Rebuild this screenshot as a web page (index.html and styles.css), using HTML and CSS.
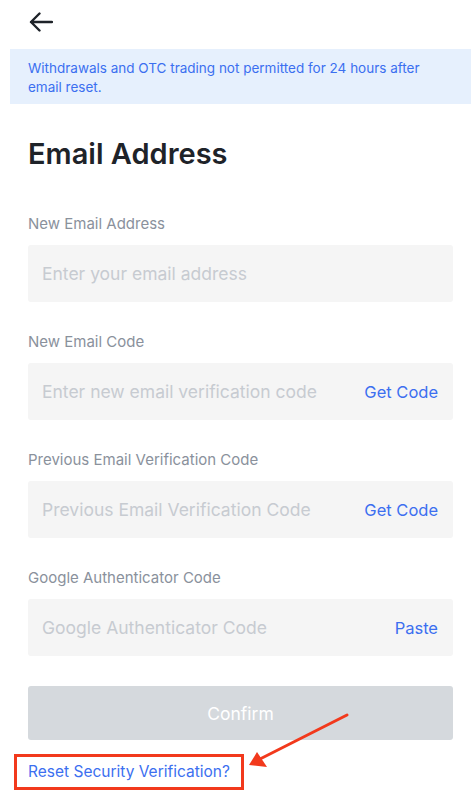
FILE: index.html
```html
<!DOCTYPE html>
<html lang="en">
<head>
    <meta charset="UTF-8">
    <meta name="viewport" content="width=device-width, initial-scale=1.0">
    <title>Email Address</title>
    <link rel="stylesheet" href="styles.css">
</head>
<body>
    <div class="topbar">
        <svg class="back" width="24" height="20" viewBox="0 0 24 20">
            <path d="M23 10H2M10.5 1.5L2 10l8.5 8.5" fill="none" stroke="#1e2329" stroke-width="2.4" stroke-linecap="round" stroke-linejoin="round"/>
        </svg>
    </div>

    <div class="notice">Withdrawals and OTC trading not permitted for 24 hours after email reset.</div>

    <div class="content">
        <h1 class="title">Email Address</h1>

        <div class="field">
            <div class="label">New Email Address</div>
            <div class="input"><span class="placeholder">Enter your email address</span></div>
        </div>

        <div class="field">
            <div class="label">New Email Code</div>
            <div class="input"><span class="placeholder">Enter new email verification code</span><a class="action" href="#">Get Code</a></div>
        </div>

        <div class="field">
            <div class="label">Previous Email Verification Code</div>
            <div class="input"><span class="placeholder">Previous Email Verification Code</span><a class="action" href="#">Get Code</a></div>
        </div>

        <div class="field">
            <div class="label">Google Authenticator Code</div>
            <div class="input"><span class="placeholder">Google Authenticator Code</span><a class="action" href="#">Paste</a></div>
        </div>

        <button class="confirm" type="button">Confirm</button>

        <div class="reset-row">
            <a class="reset" href="#">Reset Security Verification?</a>
        </div>
    </div>

    <!-- annotation arrow -->
    <svg class="annot-arrow" width="474" height="798" viewBox="0 0 474 798">
        <line x1="347" y1="715" x2="260" y2="759" stroke="#f2391c" stroke-width="3" stroke-linecap="round"/>
        <polygon points="249,765 257,752 267,767" fill="#f2391c"/>
    </svg>
</body>
</html>
```

FILE: styles.css
```css
body {
    margin: 0;
    font-family: Inter, "Noto Sans", sans-serif;
    color: #1e2329;
    background: #fff;
    position: relative;
    width: 474px;
    height: 798px;
    overflow: hidden;
}
.topbar {
    height: 49px;
    padding-left: 29px;
    display: flex;
    align-items: center;
    box-sizing: border-box;
    padding-bottom: 5px;
}
.notice {
    margin: 0 3px 0 10px;
    height: 55px;
    box-sizing: border-box;
    padding: 10px 18px 0;
    background-color: #e6f0fd;
    color: #3b6ff0;
    font-size: 13.5px;
    line-height: 19px;
}
.content {
    padding: 0 21px 0 28px;
}
.title {
    margin: 30px 0 40px;
    font-size: 29px;
    line-height: 40px;
    font-weight: 600;
    color: #1e2329;
}
.field {
    margin-bottom: 30px;
}
.label {
    font-size: 15px;
    line-height: 20px;
    color: #8a919c;
    margin-bottom: 11px;
}
.input {
    height: 57px;
    border-radius: 3px;
    background-color: #f5f5f5;
    display: flex;
    align-items: center;
    justify-content: space-between;
    padding: 0 15px 0 14px;
}
.placeholder {
    font-size: 17.5px;
    color: #c7cbd1;
}
.action {
    font-size: 16.5px;
    color: #3c6ff0;
    text-decoration: none;
}
.confirm {
    display: block;
    width: 100%;
    height: 54px;
    margin-top: 1px;
    border: none;
    border-radius: 3px;
    background-color: #d5d9dd;
    color: #fff;
    font-family: inherit;
    font-size: 17.5px;
}
.reset-row {
    margin-top: 14px;
}
.reset {
    display: inline-block;
    margin-left: -14px;
    padding: 6px 11px 6px 11px;
    border: 3px solid #f2391c;
    color: #3c6ff0;
    font-size: 15.5px;
    line-height: 18px;
    text-decoration: none;
}
.annot-arrow {
    position: absolute;
    left: 0;
    top: 0;
    pointer-events: none;
}
```
